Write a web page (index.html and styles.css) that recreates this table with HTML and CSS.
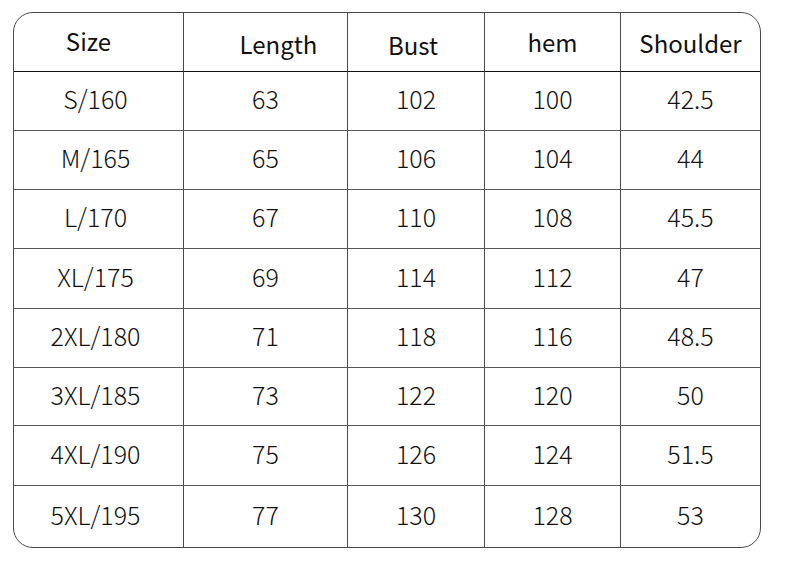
FILE: index.html
```html
<!DOCTYPE html>
<html>
<head>
<meta charset="utf-8">
<link rel="stylesheet" href="styles.css">
</head>
<body>
<div class="page">
  <div class="table">
    <div class="cell head h-size">Size</div>
    <div class="cell head h-length">Length</div>
    <div class="cell head h-bust">Bust</div>
    <div class="cell head h-hem">hem</div>
    <div class="cell head h-shoulder last">Shoulder</div>

    <div class="cell first">S/160</div><div class="cell">63</div><div class="cell">102</div><div class="cell">100</div><div class="cell last">42.5</div>
    <div class="cell first">M/165</div><div class="cell">65</div><div class="cell">106</div><div class="cell">104</div><div class="cell last">44</div>
    <div class="cell first">L/170</div><div class="cell">67</div><div class="cell">110</div><div class="cell">108</div><div class="cell last">45.5</div>
    <div class="cell first">XL/175</div><div class="cell">69</div><div class="cell">114</div><div class="cell">112</div><div class="cell last">47</div>
    <div class="cell first">2XL/180</div><div class="cell">71</div><div class="cell">118</div><div class="cell">116</div><div class="cell last">48.5</div>
    <div class="cell first">3XL/185</div><div class="cell">73</div><div class="cell">122</div><div class="cell">120</div><div class="cell last">50</div>
    <div class="cell first">4XL/190</div><div class="cell">75</div><div class="cell">126</div><div class="cell">124</div><div class="cell last">51.5</div>
    <div class="cell first bottom">5XL/195</div><div class="cell bottom">77</div><div class="cell bottom">130</div><div class="cell bottom">128</div><div class="cell bottom last">53</div>
  </div>
</div>
</body>
</html>
```
FILE: styles.css
```css
html, body {
  margin: 0;
  padding: 0;
  background: #ffffff;
}
.page {
  padding: 12px 0 0 13px;
}
.table {
  box-sizing: border-box;
  width: 748px;
  height: 536px;
  border: 1px solid #4a4a4a;
  border-radius: 20px;
  overflow: hidden;
  display: grid;
  grid-template-columns: 170px 164px 137px 136px 139px;
  grid-template-rows: 59px 59px 59px 59px 60px 59px 58px 60px 61px;
  font-family: "Noto Sans CJK SC", "Noto Sans", sans-serif;
  font-weight: 300;
  font-size: 25px;
  color: #111111;
}
.cell {
  display: flex;
  align-items: center;
  justify-content: center;
  border-right: 1px solid #4a4a4a;
  border-bottom: 1px solid #5a5a5a;
  line-height: 1;
  padding-bottom: 5px;
}
.first {
  padding-right: 6px;
}
.head {
  font-weight: 400;
  font-size: 24px;
  border-bottom-color: #111111;
  padding-bottom: 0;
  padding-top: 3px;
}
.last {
  border-right: none;
}
.bottom {
  border-bottom: none;
}
.h-size { padding-right: 20px; padding-top: 0; padding-bottom: 3px; }
.h-length { padding-left: 26px; padding-top: 4px; }
.h-bust { padding-right: 6px; padding-top: 6px; }
.h-hem { padding-top: 0; padding-bottom: 1px; }
.h-shoulder { padding-top: 2px; }
```
